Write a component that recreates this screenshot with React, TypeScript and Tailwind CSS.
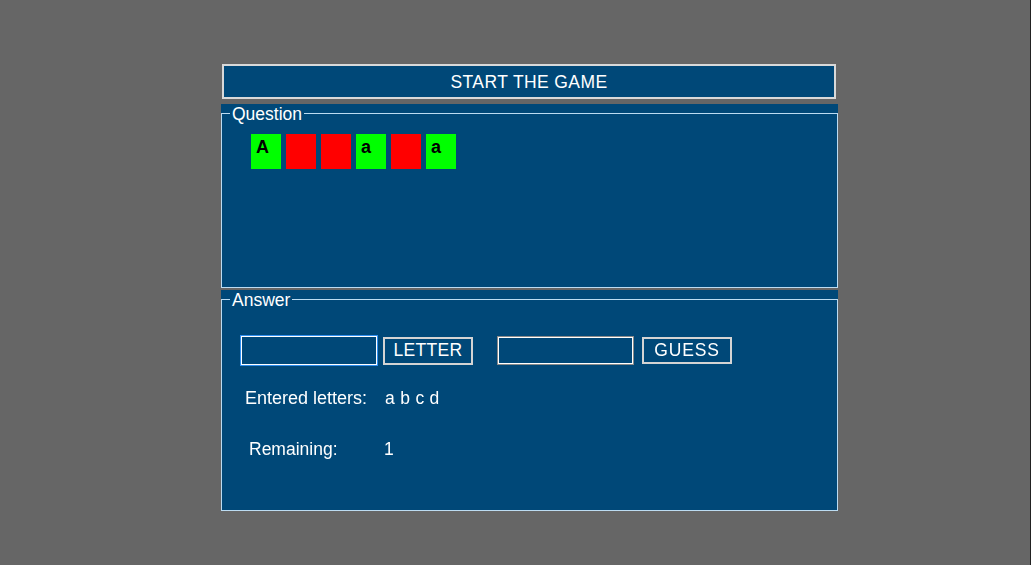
import React from "react";

const tiles: { ch: string; ok: boolean }[] = [
  { ch: "A", ok: true },
  { ch: "", ok: false },
  { ch: "", ok: false },
  { ch: "a", ok: true },
  { ch: "", ok: false },
  { ch: "a", ok: true },
];

export default function App() {
  return (
    <div className="h-[565px] w-full border-r border-[#222] bg-[#666666] pl-[221px] pt-[64px] font-['Liberation_Sans',Arial,sans-serif] text-[17.5px] text-white">
      <div className="w-[617px]">
        <button className="ml-px block h-[35px] w-[614px] border-2 border-[#d9d9d9] bg-[#004878] pt-[2px] leading-none tracking-[0.4px] text-white">
          START THE GAME
        </button>

        {/* question panel */}
        <div className="mt-[5px] h-[184px] bg-[#004878]">
          <fieldset className="h-full border border-[#bcdcf2] pl-[29px]">
            <legend className="-ml-[21px] h-[18px] px-[2px] leading-[20px]">Question</legend>
            <div className="mt-[12px] flex gap-[5px]">
              {tiles.map((t, i) => (
                <div
                  key={i}
                  className={
                    "h-[35px] w-[30px] pl-[5px] pt-[3px] text-[18px] font-bold leading-[20px] text-black " +
                    (t.ok ? "bg-[#00ff00]" : "bg-[#ff0000]")
                  }
                >
                  {t.ch}
                </div>
              ))}
            </div>
          </fieldset>
        </div>

        {/* answer panel */}
        <div className="mt-[2px] h-[221px] bg-[#004878]">
          <fieldset className="h-full border border-[#bcdcf2] pl-[19px]">
            <legend className="-ml-[11px] h-[18px] px-[2px] leading-[20px]">Answer</legend>
            <div className="mt-[28px] flex items-center">
              <input
                autoFocus
                className="h-[29px] w-[136px] border border-white bg-[#004878] px-[2px] caret-[#ff9933] outline outline-1 outline-[#2f8ff0]"
              />
              <button className="ml-[6px] h-[28px] w-[90px] border-2 border-[#d4d4d4] bg-[#004878] pt-px leading-none tracking-[0.3px] text-white">
                LETTER
              </button>
              <input className="ml-[24px] h-[29px] w-[137px] border border-[#8a8a8a] bg-[#004878] shadow-[inset_0_0_0_1px_#ffffff] outline-none" />
              <button className="ml-[8px] h-[27px] w-[90px] border-2 border-[#d4d4d4] bg-[#004878] leading-none tracking-[0.8px] text-white">
                GUESS
              </button>
            </div>

            <div className="mt-[23px] flex h-[20px] items-center pl-[4px] leading-[20px]">
              <span className="w-[140px] text-[18px]">Entered letters:</span>
              <span className="tracking-[0.3px]">a b c d</span>
            </div>
            <div className="mt-[31px] flex h-[20px] items-center pl-[8px] leading-[20px]">
              <span className="w-[135px]">Remaining:</span>
              <span>1</span>
            </div>
          </fieldset>
        </div>
      </div>
    </div>
  );
}
